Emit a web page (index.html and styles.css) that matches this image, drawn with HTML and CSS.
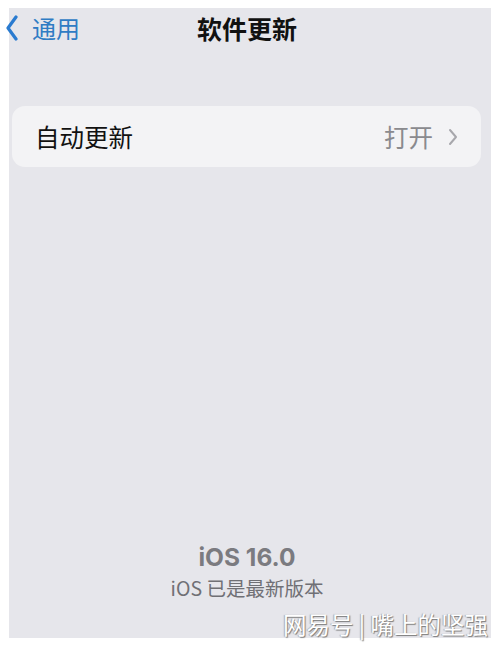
FILE: index.html
```html
<!DOCTYPE html>
<html lang="zh">
<head>
<meta charset="utf-8">
<link rel="stylesheet" href="styles.css">
</head>
<body>
<div class="screen">
  <header class="nav">
    <div class="back">
      <svg class="chev" width="14" height="26" viewBox="0 0 14 26"><path d="M11 2 L3 13 L11 24" fill="none" stroke="#2a7bd0" stroke-width="3.2" stroke-linecap="round" stroke-linejoin="round"/></svg>
      <span class="back-text">通用</span>
    </div>
    <h1 class="title">软件更新</h1>
  </header>
  <section class="card">
    <span class="label">自动更新</span>
    <span class="value">打开
      <svg class="arrow" width="10" height="18" viewBox="0 0 10 18"><path d="M2 2 L8 9 L2 16" fill="none" stroke="#a7a7ac" stroke-width="2" stroke-linecap="round" stroke-linejoin="round"/></svg>
    </span>
  </section>
  <div class="spacer"></div>
  <section class="version">
    <div class="ver">iOS 16.0</div>
    <div class="ver-sub">iOS 已是最新版本</div>
  </section>
</div>
<div class="watermark">网易号 <span class="bar">|</span> 嘴上的坚强</div>
</body>
</html>
```
FILE: styles.css
```css
html, body {
  margin: 0;
  padding: 0;
  background: #ffffff;
}
body {
  width: 500px;
  height: 650px;
  position: relative;
  overflow: hidden;
  font-family: "Noto Sans CJK SC", "Noto Sans", sans-serif;
}
.screen {
  margin: 8px 9px 0 9px;
  width: 482px;
  height: 630px;
  background: #e6e6eb;
  display: flex;
  flex-direction: column;
}
.nav {
  height: 44px;
  position: relative;
  display: flex;
  align-items: flex-start;
  justify-content: center;
}
.back {
  position: absolute;
  left: -4px;
  top: 5px;
  display: flex;
  align-items: center;
  gap: 13px;
}
.chev {
  display: block;
}
.back-text {
  color: #2f7cc4;
  font-size: 24px;
  line-height: 30px;
}
.title {
  margin: 4px 6px 0 0;
  font-size: 25px;
  font-weight: 700;
  color: #111;
  line-height: 32px;
}
.card {
  margin: 54px 10px 0 3px;
  height: 61px;
  background: #f3f3f5;
  border-radius: 13px;
  display: flex;
  align-items: center;
  justify-content: space-between;
  padding: 0 23px 0 23px;
}
.label {
  font-size: 24.5px;
  color: #111;
  line-height: 30px;
}
.value {
  font-size: 24.5px;
  color: #8a8a8e;
  display: flex;
  align-items: center;
  gap: 15px;
  line-height: 30px;
}
.arrow {
  display: block;
}
.spacer {
  flex: 1;
}
.version {
  display: flex;
  flex-direction: column;
  align-items: center;
  padding-bottom: 36px;
  margin-right: 6px;
}
.ver {
  font-family: "Inter", "Noto Sans", sans-serif;
  font-weight: 700;
  font-size: 24.5px;
  color: #7b7b80;
  line-height: 30px;
}
.ver-sub {
  font-size: 19.5px;
  color: #707075;
  line-height: 28px;
  margin-top: 2px;
}
.watermark {
  position: absolute;
  left: 283px;
  top: 608px;
  font-size: 23.5px;
  line-height: 32px;
  color: #ffffff;
  text-shadow: 1px 1px 1px #7a7a7a, -1px 0 1px #aaa;
  white-space: nowrap;
}
.bar {
  color: #fff;
}
```
